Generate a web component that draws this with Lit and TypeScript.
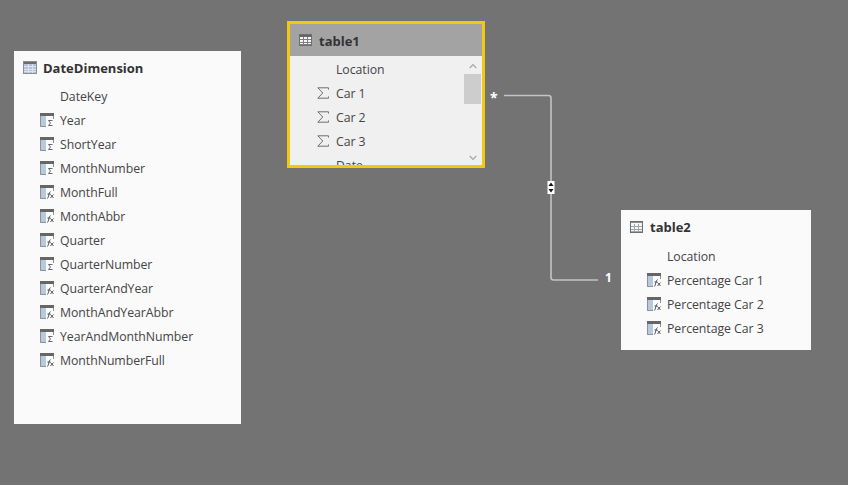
import { LitElement, html, css, svg } from "lit";
import { customElement } from "lit/decorators.js";

type Kind = "none" | "calc" | "fx" | "sum";
type TableVariant = "date" | "active" | "plain";
interface Row { name: string; kind: Kind }

const tableIcon = (v: TableVariant) => {
  const w = v === "date" ? 14 : 13;
  const h = v === "date" ? 13 : 12;
  const fill = v === "date" ? "#b4c4d6" : v === "active" ? "#f6f6f6" : "#f4f7fa";
  const band = v === "date" ? "#6c6c6c" : v === "active" ? "#666" : "#8c8c8c";
  const grid = v === "date" ? "#dbe3ec" : v === "active" ? "#7e7e7e" : "#a4a4a4";
  return html`<svg class="ticon" width="${w}" height="${h}" viewBox="0 0 ${w} ${h}">
    <rect width="${w}" height="${h}" fill="${fill}"/>
    <rect width="${w}" height="${v === "plain" ? 2 : 3}" fill="${band}"/>
    ${[4, 8].map((x) => svg`<rect x="${x + (v === "date" ? 1 : 0)}" y="3" width="1" height="${h - 3}" fill="${grid}"/>`)}
    ${[5, 8, 10].map((y) => svg`<rect x="0" y="${y}" width="${w}" height="1" fill="${grid}"/>`)}
    <rect x=".5" y=".5" width="${w - 1}" height="${h - 1}" fill="none" stroke="${v === "date" ? "#8b8f94" : "#6e6e6e"}"/>
  </svg>`;
};

const fieldIcon = (kind: Kind) => {
  if (kind === "none") return html`<span class="fi"></span>`;
  if (kind === "sum")
    return html`<svg class="fi" viewBox="0 0 12 12">
      <path d="M11.5 2.5V.8H.8L5.8 6L.8 11.2H11.5V9.5" fill="none" stroke="#6e6e6e" stroke-width="1"/>
    </svg>`;
  return html`<svg class="fi" viewBox="0 0 14 14">
    <rect width="14" height="14" fill="#fbfbfb"/>
    <rect y="3" width="6" height="11" fill="#b7c9de"/>
    <rect width="14" height="3" fill="#666"/>
    <path d="M.5 3V13.5H6M13.5 3V6" fill="none" stroke="#909090"/>
    ${kind === "fx"
      ? svg`<path d="M7.5 13.5C9 12 8.5 7.5 10.5 6.5M7.5 9H10.5M10.5 9.5L13.5 13M13.5 9.5L10.5 13" fill="none" stroke="#444" stroke-width=".9"/>`
      : svg`<path d="M12.5 7.5H8.5L10.5 10L8.5 12.5H12.5" fill="none" stroke="#555" stroke-width=".9"/>`}
  </svg>`;
};

const dateRows: Row[] = [
  { name: "DateKey", kind: "none" },
  { name: "Year", kind: "calc" },
  { name: "ShortYear", kind: "calc" },
  { name: "MonthNumber", kind: "calc" },
  { name: "MonthFull", kind: "fx" },
  { name: "MonthAbbr", kind: "fx" },
  { name: "Quarter", kind: "fx" },
  { name: "QuarterNumber", kind: "calc" },
  { name: "QuarterAndYear", kind: "fx" },
  { name: "MonthAndYearAbbr", kind: "fx" },
  { name: "YearAndMonthNumber", kind: "calc" },
  { name: "MonthNumberFull", kind: "fx" },
];
const t1Rows: Row[] = [
  { name: "Location", kind: "none" },
  { name: "Car 1", kind: "sum" },
  { name: "Car 2", kind: "sum" },
  { name: "Car 3", kind: "sum" },
  { name: "Date", kind: "none" },
];
const t2Rows: Row[] = [
  { name: "Location", kind: "none" },
  { name: "Percentage Car 1", kind: "fx" },
  { name: "Percentage Car 2", kind: "fx" },
  { name: "Percentage Car 3", kind: "fx" },
];

@customElement("app-root")
export class AppRoot extends LitElement {
  static styles = css`
    :host {
      display: block;
      position: relative;
      width: 848px;
      height: 485px;
      overflow: hidden;
      background: #737373;
      font-family: "Open Sans", "Noto Sans", sans-serif;
      color: #444;
    }
    .card {
      position: absolute;
      box-sizing: border-box;
      background: #fafafa;
      display: flex;
      flex-direction: column;
      overflow: hidden;
    }
    .date { left: 14px; top: 51px; width: 227px; height: 373px; }
    .t2 { left: 621px; top: 210px; width: 190px; height: 140px; }
    .t1 {
      left: 287px; top: 21px; width: 198px; height: 147px;
      border: 3px solid #f2c811;
      background: #f0f0f0;
    }
    .head {
      display: flex;
      align-items: center;
      gap: 7px;
      height: 34px;
      padding-left: 9px;
      flex: none;
    }
    .date .head { height: 33px; gap: 6px; }
    .t1 .head { height: 32px; padding-left: 9px; background: #a3a3a3; }
    .t1 .title { margin-top: 2px; }
    .title {
      font-size: 13px;
      font-weight: 700;
      color: #333;
    }
    .rows { flex: 1; overflow: hidden; }
    .t1 .rows { position: relative; padding-top: 1px; }
    .row {
      display: flex;
      align-items: center;
      height: 24px;
      padding-left: 26px;
      gap: 6px;
      font-size: 12.3px;
      white-space: nowrap;
      letter-spacing: -0.05px;
    }
    .t1 .row { padding-left: 27px; gap: 7px; }
    .fi { width: 14px; height: 14px; flex: none; display: block; }
    .t1 .fi { width: 12px; height: 12px; }
    .ticon { flex: none; display: block; }
    .scroll {
      position: absolute;
      right: 1px;
      top: 0;
      width: 17px;
      height: 109px;
    }
    .thumb {
      position: absolute;
      left: 0;
      top: 18px;
      width: 17px;
      height: 30px;
      background: #cdcdcd;
    }
    .arrow { position: absolute; left: 5px; }
    .arrow.up { top: 7px; }
    .arrow.down { top: 99px; }
    .lines { position: absolute; left: 0; top: 0; pointer-events: none; }
    .mark {
      position: absolute;
      color: #fff;
      font-weight: 700;
      font-size: 14px;
      line-height: 14px;
    }
    .star { left: 490px; top: 91px; }
    .one { left: 605px; top: 271px; font-size: 12px; }
  `;

  private rows(rows: Row[]) {
    return rows.map(
      (r) => html`<div class="row">${fieldIcon(r.kind)}<span>${r.name}</span></div>`
    );
  }

  render() {
    return html`
      <div class="card date">
        <div class="head">${tableIcon("date")}<span class="title">DateDimension</span></div>
        <div class="rows">${this.rows(dateRows)}</div>
      </div>

      <div class="card t1">
        <div class="head">${tableIcon("active")}<span class="title">table1</span></div>
        <div class="rows">
          ${this.rows(t1Rows)}
          <div class="scroll">
            <svg class="arrow up" width="8" height="6" viewBox="0 0 8 6"><path d="M.7 5L4 1.5L7.3 5" fill="none" stroke="#a6a6a6" stroke-width="1.2"/></svg>
            <div class="thumb"></div>
            <svg class="arrow down" width="8" height="6" viewBox="0 0 8 6"><path d="M.7 1L4 4.5L7.3 1" fill="none" stroke="#a6a6a6" stroke-width="1.2"/></svg>
          </div>
        </div>
      </div>

      <div class="card t2">
        <div class="head">${tableIcon("plain")}<span class="title">table2</span></div>
        <div class="rows">${this.rows(t2Rows)}</div>
      </div>

      <svg class="lines" width="848" height="485" viewBox="0 0 848 485">
        <path d="M504 95.5H548.5Q551 95.5 551 98V277.5Q551 280 553.5 280H598" fill="none" stroke="#c4c4c4" stroke-width="1.6"/>
        <rect x="547.5" y="181" width="7" height="13" fill="#fff"/>
        <path d="M551 182.5L553.5 186H548.5Z" fill="#111"/>
        <path d="M551 192.5L553.5 189H548.5Z" fill="#111"/>
      </svg>
      <span class="mark star">*</span>
      <span class="mark one">1</span>
    `;
  }
}
